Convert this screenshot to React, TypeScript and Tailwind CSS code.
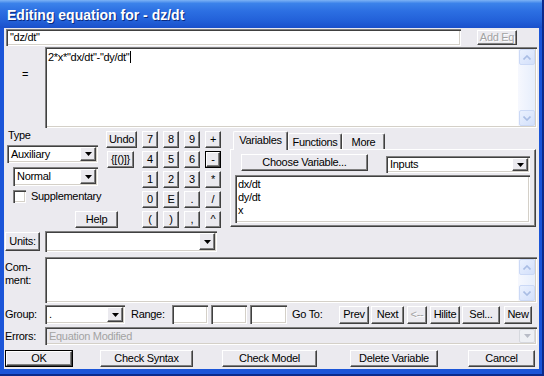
import React from "react";

const raised =
  "bg-[#ebeaef] border border-t-white border-l-white border-r-[#404040] border-b-[#404040] shadow-[inset_-1px_-1px_0_#808080] flex items-center justify-center leading-none whitespace-nowrap";
const sunken =
  "shadow-[inset_1px_1px_0_#808080,inset_2px_2px_0_#404040,inset_-1px_-1px_0_#ffffff,inset_-2px_-2px_0_#d4d0c8]";

function Btn({
  className = "",
  children,
  def = false,
  disabled = false,
}: {
  className?: string;
  children?: React.ReactNode;
  def?: boolean;
  disabled?: boolean;
}) {
  const txt = disabled ? "text-[#a3a3a3] [text-shadow:1px_1px_0_#ffffff]" : "text-black";
  if (def) {
    return (
      <div className={`border border-black shrink-0 ${className}`}>
        <div className={`${raised} w-full h-full ${txt}`}>{children}</div>
      </div>
    );
  }
  return <div className={`${raised} ${txt} shrink-0 ${className}`}>{children}</div>;
}

function Tri({ color = "#000" }: { color?: string }) {
  return (
    <svg width="7" height="4" viewBox="0 0 7 4">
      <path d="M0 0H7L3.5 4Z" fill={color} />
    </svg>
  );
}

function Combo({ className = "", text = "" }: { className?: string; text?: string }) {
  return (
    <div className={`${sunken} bg-white flex items-stretch p-[2px] shrink-0 ${className}`}>
      <div className="flex-1 pl-[2px] flex items-center leading-none">{text}</div>
      <div className={`${raised} w-[16px]`}>
        <Tri />
      </div>
    </div>
  );
}

function Field({ className = "" }: { className?: string }) {
  return <div className={`${sunken} bg-white shrink-0 ${className}`} />;
}

function ArrowBtn({ up = false }: { up?: boolean }) {
  return (
    <div className="w-[16px] h-[16px] rounded-[2px] border border-[#cbd9f6] bg-[linear-gradient(135deg,#eaf1fe,#d3e0fb)] flex items-center justify-center">
      <svg width="8" height="5" viewBox="0 0 8 5">
        {up ? (
          <path d="M0.5 4.5L4 1L7.5 4.5" stroke="#a9bde4" strokeWidth="1.6" fill="none" />
        ) : (
          <path d="M0.5 0.5L4 4L7.5 0.5" stroke="#a9bde4" strokeWidth="1.6" fill="none" />
        )}
      </svg>
    </div>
  );
}

function XPScroll() {
  return (
    <div className="w-[17px] h-full flex flex-col justify-between bg-[linear-gradient(to_right,#f6f8fe,#e6eefc)] pl-px shrink-0">
      <ArrowBtn up />
      <ArrowBtn />
    </div>
  );
}

function K({ children, def = false }: { children: React.ReactNode; def?: boolean }) {
  return (
    <Btn className="w-[16px] h-[17px]" def={def}>
      {children}
    </Btn>
  );
}

const tab =
  "bg-[#ebeaef] border-t border-l border-white border-r border-r-[#404040] shadow-[inset_-1px_0_0_#808080] rounded-t-[2px] flex justify-center pt-[3px] leading-none";

export default function App() {
  return (
    <div className="w-[544px] h-[376px] flex flex-col bg-[#1b55d8] border-r-2 border-b-2 border-[#0a2a8c] text-[11px] tracking-[-0.3px] text-black font-['Liberation_Sans',Arial,sans-serif] overflow-hidden select-none">
      {/* Title bar */}
      <div className="h-[28px] shrink-0 flex items-center pl-[7px] pt-[2px] bg-[linear-gradient(to_bottom,#7db3f5_0%,#3b82ea_12%,#2c6fe2_40%,#2260d8_75%,#1a50cb_100%)]">
        <span className="text-white font-bold text-[14px] tracking-normal [text-shadow:1px_1px_0_#0a2a80]">
          Editing equation for - dz/dt
        </span>
      </div>

      {/* Body */}
      <div className="ml-[4px] mr-[3px] mb-[5px] flex-1 bg-[#ebeaef] flex flex-col">
        {/* Row 1 */}
        <div className="mt-[1px] h-[17px] flex">
          <div className={`${sunken} bg-white ml-[2px] w-[455px] h-[17px] flex items-center pl-[4px] leading-none`}>
            "dz/dt"
          </div>
          <Btn disabled className="ml-[16px] mt-[1px] w-[40px] h-[15px]">
            Add Eq
          </Btn>
        </div>

        {/* Row 2: equation */}
        <div className="mt-[1px] h-[81px] flex">
          <div className="w-[41px] pt-[19px] pl-[18px]">=</div>
          <div className={`${sunken} bg-white w-[492px] h-[81px] p-[2px] flex`}>
            <div className="flex-1 pl-[1px] pt-[2px] leading-[12px] flex items-start">
              <span>2*x*"dx/dt"-"dy/dt"</span>
              <span className="inline-block w-px h-[12px] bg-black ml-px" />
            </div>
            <XPScroll />
          </div>
        </div>

        {/* Middle */}
        <div className="h-[100px] flex">
          {/* Left block */}
          <div className="w-[225px] shrink-0">
            <div className="ml-[3px] mt-[3px] grid grid-cols-[95px_30px_16px_16px_16px_16px] grid-rows-[17px_17px_17px_17px_17px] gap-x-[5px] gap-y-[3px]">
              <div className="row-span-4 -mt-[3px] flex flex-col">
                <div className="h-[15px] leading-[15px] pl-px">Type</div>
                <Combo className="mt-[2px] w-[91px] h-[18px]" text="Auxiliary" />
                <Combo className="mt-[4px] ml-[6px] w-[85px] h-[19px]" text="Normal" />
                <div className="mt-[4px] flex items-center h-[13px]">
                  <div className={`${sunken} bg-white ml-[6px] w-[13px] h-[13px] shrink-0`} />
                  <span className="ml-[5px] leading-none whitespace-nowrap">Supplementary</span>
                </div>
              </div>
              <Btn className="w-[31px] h-[17px] -ml-px">Undo</Btn>
              <K>7</K>
              <K>8</K>
              <K>9</K>
              <K>+</K>
              <Btn className="w-[27px] h-[17px]">{"{[()]}"}</Btn>
              <K>4</K>
              <K>5</K>
              <K>6</K>
              <K def>-</K>
              <div />
              <K>1</K>
              <K>2</K>
              <K>3</K>
              <K>*</K>
              <div />
              <K>0</K>
              <K>E</K>
              <K>.</K>
              <K>/</K>
              <div className="col-span-2">
                <Btn className="ml-[68px] w-[43px] h-[17px]">Help</Btn>
              </div>
              <K>(</K>
              <K>)</K>
              <K>,</K>
              <K>^</K>
            </div>
          </div>

          {/* Tab panel */}
          <div className="ml-[1px] mt-[2px] w-[306px] flex flex-col">
            <div className="h-[19px] flex items-end pl-[3px]">
              <div className={`relative z-10 w-[55px] h-[19px] -mb-px ${tab}`}>Variables</div>
              <div className={`w-[54px] h-[16px] ${tab}`}>Functions</div>
              <div className={`w-[43px] h-[16px] ${tab}`}>More</div>
            </div>
            <div className="h-[78px] border border-t-white border-l-white border-r-[#404040] border-b-[#404040] shadow-[inset_-1px_-1px_0_#808080] flex flex-col">
              <div className="flex items-start mt-[4px]">
                <Btn className="ml-[10px] w-[127px] h-[17px]">Choose Variable...</Btn>
                <Combo className="ml-[18px] mt-[2px] w-[144px] h-[17px]" text="Inputs" />
              </div>
              <div className={`${sunken} bg-white ml-[4px] mt-[2px] w-[295px] h-[48px] pl-[3px] pt-[3px] leading-[13px]`}>
                <div>dx/dt</div>
                <div>dy/dt</div>
                <div>x</div>
              </div>
            </div>
          </div>
        </div>

        {/* Units */}
        <div className="mt-[3px] h-[22px] flex items-start">
          <Btn className="ml-px mt-px w-[35px] h-[19px]">Units:</Btn>
          <Combo className="ml-[5px] w-[172px] h-[21px]" />
        </div>

        {/* Comment */}
        <div className="mt-[4px] h-[46px] flex">
          <div className="w-[41px] pl-px pt-[4px] leading-[13px]">
            <div>Com-</div>
            <div>ment:</div>
          </div>
          <div className={`${sunken} bg-white w-[492px] h-[46px] p-[2px] flex justify-end`}>
            <XPScroll />
          </div>
        </div>

        {/* Group row */}
        <div className="mt-[2px] h-[19px] flex items-center">
          <div className="ml-px w-[40px] leading-none shrink-0">Group:</div>
          <Combo className="w-[80px] h-[19px]" text="." />
          <div className="ml-[6px] w-[41px] leading-none shrink-0">Range:</div>
          <Field className="w-[36px] h-[19px]" />
          <Field className="ml-[3px] w-[36px] h-[19px]" />
          <Field className="ml-[3px] w-[37px] h-[19px]" />
          <div className="ml-[5px] w-[47px] leading-none shrink-0">Go To:</div>
          <Btn className="w-[30px] h-[18px]">Prev</Btn>
          <Btn className="ml-[2px] w-[33px] h-[18px]">Next</Btn>
          <Btn disabled className="ml-[3px] w-[20px] h-[18px]">
            {"<--"}
          </Btn>
          <Btn className="ml-[3px] w-[30px] h-[18px]">Hilite</Btn>
          <Btn className="ml-[2px] w-[38px] h-[18px]">Sel...</Btn>
          <Btn className="ml-[4px] w-[28px] h-[18px]">New</Btn>
        </div>

        {/* Errors row */}
        <div className="mt-[3px] h-[18px] flex items-center">
          <div className="ml-px w-[40px] leading-none shrink-0">Errors:</div>
          <div className={`${sunken} bg-[#ebeaef] w-[492px] h-[18px] p-[2px] flex items-stretch`}>
            <div className="flex-1 pl-[2px] flex items-center text-[#a3a3a3] leading-none">Equation Modified</div>
            <div className="w-[16px] rounded-[2px] border border-[#d6d8de] bg-[#eef0f4] flex items-center justify-center">
              <Tri color="#b8bcc6" />
            </div>
          </div>
        </div>

        {/* Bottom buttons */}
        <div className="mt-[5px] h-[17px] flex">
          <Btn def className="ml-px w-[68px] h-[17px]">
            OK
          </Btn>
          <Btn className="ml-[27px] w-[93px] h-[17px]">Check Syntax</Btn>
          <Btn className="ml-[29px] w-[95px] h-[17px]">Check Model</Btn>
          <Btn className="ml-[33px] w-[88px] h-[17px]">Delete Variable</Btn>
          <Btn className="ml-[30px] w-[67px] h-[17px]">Cancel</Btn>
        </div>
      </div>
    </div>
  );
}
